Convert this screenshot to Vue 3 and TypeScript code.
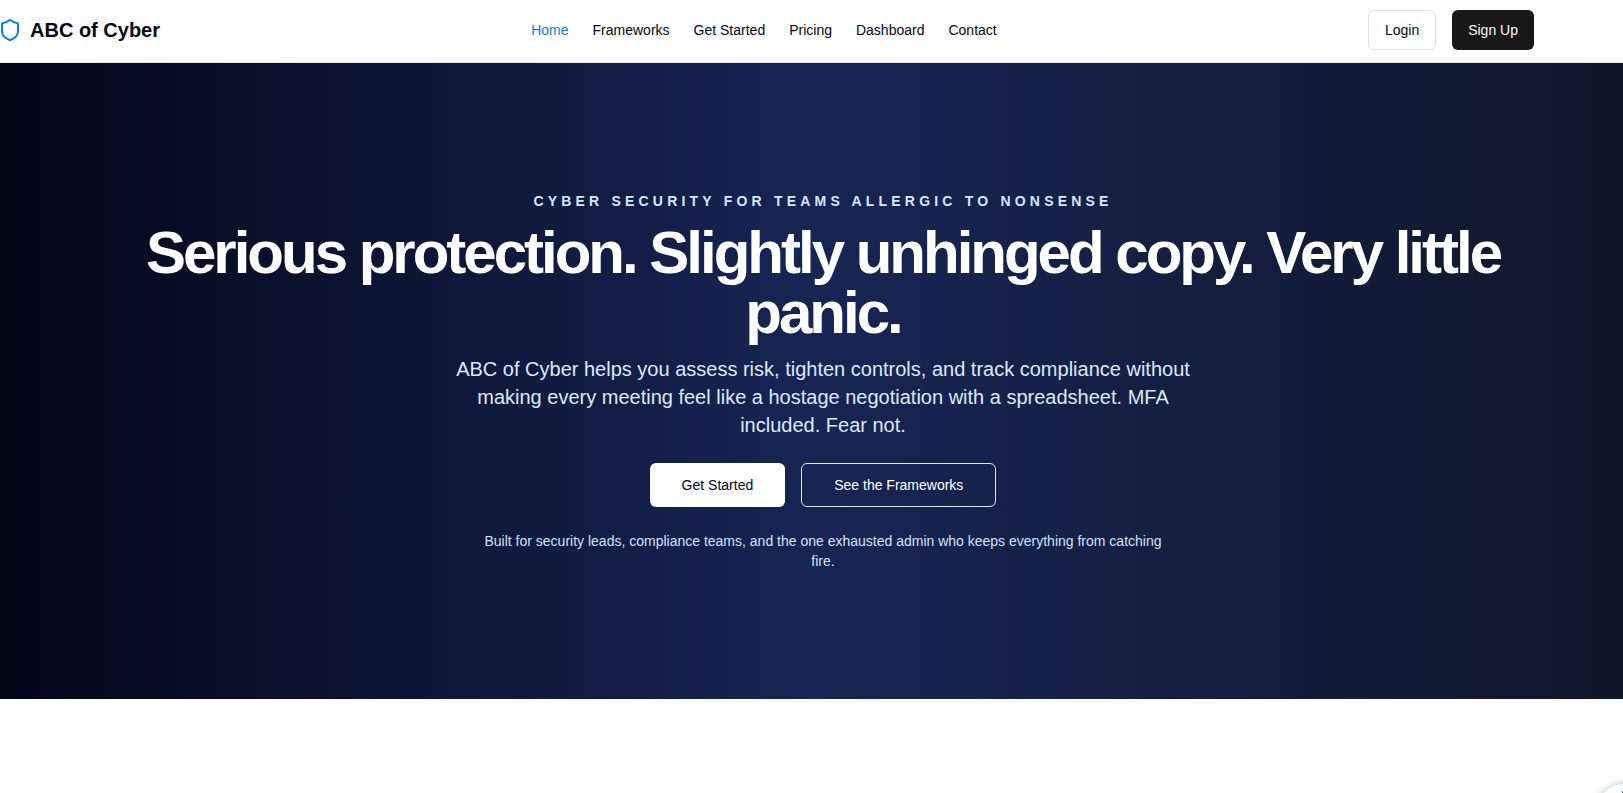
<template>
  <div class="page">
    <header class="site-header">
      <div class="header-inner">
        <a class="brand" href="#">
          <svg class="brand-icon" viewBox="0 0 24 24" fill="none" stroke="currentColor">
            <path
              d="M20 13c0 5-3.5 7.5-7.66 8.95a1 1 0 0 1-.67-.01C7.5 20.5 4 18 4 13V6a1 1 0 0 1 1-1c2 0 4.5-1.2 6.24-2.72a1.17 1.17 0 0 1 1.52 0C14.51 3.81 17 5 19 5a1 1 0 0 1 1 1z"
            />
          </svg>
          <span>ABC of Cyber</span>
        </a>

        <nav class="nav">
          <a
            v-for="item in navItems"
            :key="item"
            href="#"
            class="nav-link"
            :class="{ active: item === activeItem }"
          >{{ item }}</a>
        </nav>

        <div class="actions">
          <button class="btn btn-outline">Login</button>
          <button class="btn btn-dark">Sign Up</button>
        </div>
      </div>
    </header>

    <section class="hero">
      <div class="hero-inner">
        <p class="eyebrow">Cyber security for teams allergic to nonsense</p>
        <h1 class="title">Serious protection. Slightly unhinged copy. Very little panic.</h1>
        <p class="lead">
          ABC of Cyber helps you assess risk, tighten controls, and track compliance without making
          every meeting feel like a hostage negotiation with a spreadsheet. MFA included. Fear not.
        </p>
        <div class="cta">
          <button class="btn btn-lg btn-white">Get Started</button>
          <button class="btn btn-lg btn-ghost">See the Frameworks</button>
        </div>
        <p class="note">
          Built for security leads, compliance teams, and the one exhausted admin who keeps
          everything from catching fire.
        </p>
      </div>
    </section>

    <!-- floating widget, partly off screen -->
    <div class="widget">
      <span class="widget-mark"></span>
    </div>
  </div>
</template>

<script setup lang="ts">
import { ref } from 'vue'

const navItems: string[] = ['Home', 'Frameworks', 'Get Started', 'Pricing', 'Dashboard', 'Contact']

const activeItem = ref('Home')
</script>

<style>
body {
  margin: 0;
  overflow: hidden;
  background: #fff;
}
</style>

<style scoped>
.page {
  position: relative;
  height: 100vh;
  overflow: hidden;
  font-family: 'Liberation Sans', Arial, sans-serif;
  font-size: 14px;
  line-height: 20px;
  color: #020617;
}

p,
h1 {
  margin: 0;
}

a {
  color: inherit;
  text-decoration: none;
}

/* header */
.site-header {
  border-bottom: 1px solid #e2e8f0;
  background: #fff;
}

.header-inner {
  display: flex;
  align-items: center;
  justify-content: space-between;
  width: 1536px;
  height: 62px;
  margin-left: -2px;
  padding-bottom: 2px;
  box-sizing: border-box;
}

.brand {
  display: flex;
  align-items: center;
  gap: 8px;
  font-size: 20px;
  line-height: 28px;
  font-weight: 700;
}

.brand-icon {
  width: 24px;
  height: 24px;
  color: #0f7fdd;
  stroke-width: 2;
  stroke-linecap: round;
  stroke-linejoin: round;
}

.nav {
  display: flex;
  gap: 24px;
}

.nav-link.active {
  color: #0f7fdd;
}

.actions {
  display: flex;
  gap: 16px;
}

/* buttons */
.btn {
  height: 40px;
  padding: 0 16px;
  border: 0;
  border-radius: 6px;
  font: inherit;
  color: inherit;
}

.btn-outline {
  border: 1px solid #e2e2e4;
  background: #fff;
}

.btn-dark {
  background: #181818;
  color: #fafafa;
}

.btn-lg {
  height: 44px;
  padding: 0 32px;
}

.btn-white {
  background: #fff;
}

.btn-ghost {
  border: 1px solid #dbeafe;
  background: transparent;
  color: #fff;
}

/* hero */
.hero {
  padding: 128px 0 128px 23px;
  background: linear-gradient(to right, #020617, #172554, #0f172a);
}

.hero-inner {
  display: flex;
  flex-direction: column;
  align-items: center;
  gap: 12px;
  max-width: 1400px;
  margin: 0 auto;
  text-align: center;
}

.eyebrow {
  font-weight: 700;
  letter-spacing: 4.2px;
  text-transform: uppercase;
  color: #d3e8ff;
}

.title {
  font-size: 60px;
  line-height: 60px;
  font-weight: 700;
  letter-spacing: -3px;
  color: #fff;
}

.lead {
  max-width: 750px;
  font-size: 20px;
  line-height: 28px;
  color: #dbeafe;
}

.cta {
  display: flex;
  gap: 16px;
  padding: 12px 0;
}

.note {
  max-width: 700px;
  color: #cfe3fd;
}

/* floating widget */
.widget {
  position: absolute;
  top: 784px;
  left: 1595px;
  width: 60px;
  height: 60px;
  border-radius: 50%;
  background: #fff;
  box-shadow: 0 0 6px 2px rgba(30, 50, 70, 0.2);
}

.widget-mark {
  position: absolute;
  top: 7px;
  left: 27px;
  width: 8px;
  height: 8px;
  background: #2f6f9f;
}
</style>
